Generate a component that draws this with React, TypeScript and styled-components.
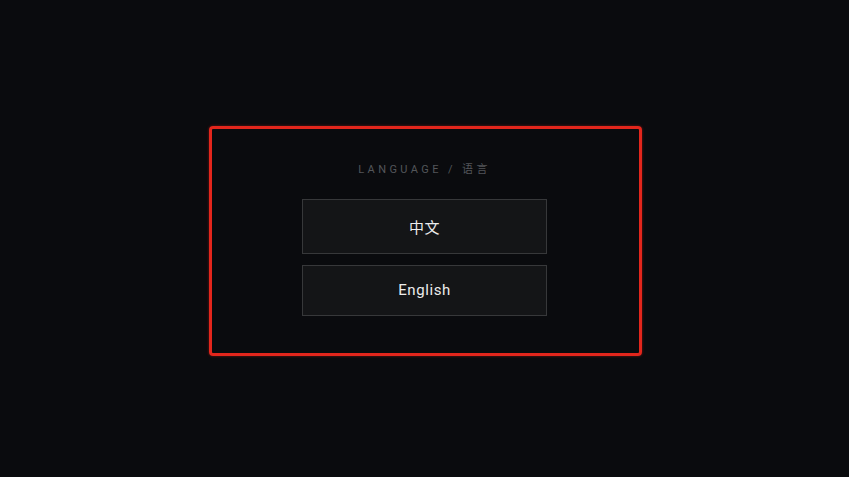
import styled, { createGlobalStyle } from "styled-components";

const GlobalStyle = createGlobalStyle`
  html, body {
    margin: 0;
    padding: 0;
    height: 100%;
    background-color: #0a0b0e;
  }

  #root {
    height: 100%;
  }
`;

const languages = [
  { code: "zh", label: "中文", tall: true },
  { code: "en", label: "English", tall: false },
];

const Page = styled.main`
  height: 100%;
  display: flex;
  align-items: center;
  justify-content: center;
  font-family: Roboto, "Noto Sans CJK SC", sans-serif;
  padding-top: 4px;
  padding-left: 2px;
  box-sizing: border-box;
`;

const Panel = styled.section`
  width: 433px;
  height: 230px;
  box-sizing: border-box;
  border: 3px solid #e3261c;
  border-radius: 4px;
  box-shadow: 0 0 3px rgba(227, 38, 28, 0.45);
  display: flex;
  flex-direction: column;
  align-items: center;
  padding: 34px 2px 0 0;
`;

const Label = styled.h2`
  margin: 0 0 22px;
  font-size: 11px;
  line-height: 14px;
  font-weight: 400;
  letter-spacing: 3.4px;
  color: #53565a;
  text-transform: uppercase;
`;

const Options = styled.div`
  display: flex;
  flex-direction: column;
  gap: 11px;
`;

const OptionButton = styled.button<{ $tall?: boolean }>`
  width: 245px;
  height: ${({ $tall }) => ($tall ? "55px" : "51px")};
  box-sizing: border-box;
  background-color: #141517;
  border: 1px solid #37383a;
  border-radius: 0;
  color: #ececec;
  font-family: inherit;
  font-size: 15px;
  letter-spacing: 0.6px;
  cursor: pointer;
  transition: border-color 200ms;

  &:hover {
    border-color: #5a5b5e;
  }
`;

export default function App() {
  return (
    <>
      <GlobalStyle />
      <Page>
        <Panel>
          <Label>Language / 语言</Label>
          <Options>
            {languages.map((lang) => (
              <OptionButton key={lang.code} $tall={lang.tall}>
                {lang.label}
              </OptionButton>
            ))}
          </Options>
        </Panel>
      </Page>
    </>
  );
}
